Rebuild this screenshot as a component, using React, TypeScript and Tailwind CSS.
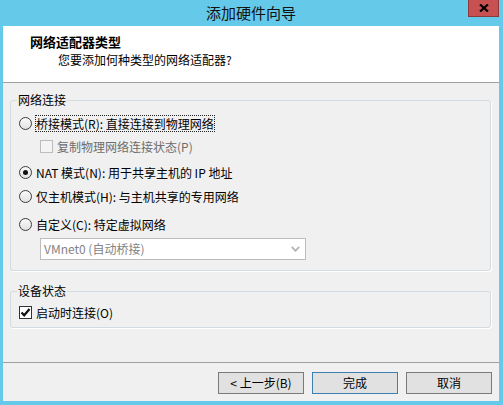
import React from "react";

function Radio({ checked }: { checked?: boolean }) {
  return (
    <span className="flex h-[13px] w-[13px] shrink-0 items-center justify-center rounded-full border border-[#3c3c3c] bg-gradient-to-b from-[#fafafa] to-[#e2e2e2]">
      {checked && <span className="h-[5px] w-[5px] rounded-full bg-[#111]" />}
    </span>
  );
}

function Check({ checked, disabled }: { checked?: boolean; disabled?: boolean }) {
  return (
    <span
      className={
        disabled
          ? "flex h-[13px] w-[13px] shrink-0 items-center justify-center border border-[#bcbcbc] bg-[#f4f4f4]"
          : "flex h-[13px] w-[13px] shrink-0 items-center justify-center border border-[#333] bg-white"
      }
    >
      {checked && (
        <svg width="11" height="11" viewBox="0 0 11 11">
          <path d="M1.5 5.5 L4.2 8.3 L9.5 2" fill="none" stroke="#111" strokeWidth="2.2" />
        </svg>
      )}
    </span>
  );
}

function Option({
  label,
  checked,
  focused,
}: {
  label: string;
  checked?: boolean;
  focused?: boolean;
}) {
  return (
    <div className="flex h-[16px] items-center gap-[3px]">
      <Radio checked={checked} />
      <span
        className={
          focused
            ? "border border-dotted border-[#222] px-[0px] leading-[15px]"
            : "border border-transparent leading-[15px]"
        }
      >
        {label}
      </span>
    </div>
  );
}

function Group({ title, children, pb }: { title: string; children: React.ReactNode; pb: string }) {
  return (
    <fieldset className="rounded-[3px] border border-[#d3dbe1] shadow-[1px_1px_0_#fff]">
      <legend className="ml-[6px] px-[1px] leading-[16px]">{title}</legend>
      <div className={"flex flex-col pl-[8px] " + pb}>{children}</div>
    </fieldset>
  );
}

export default function App() {
  return (
    <div className="flex h-[405px] w-[503px] flex-col bg-[#65c9e9] pb-[4px] pl-[3px] pr-[4px] font-['Noto_Sans_CJK_SC',sans-serif] text-[12px] text-black">
      {/* Title bar */}
      <div className="relative flex h-[26px] shrink-0 items-center justify-center">
        <span className="text-[15px] leading-[20px] text-[#111]">添加硬件向导</span>
        <div className="absolute right-0 top-0 flex h-[17px] w-[31px] items-center justify-center border border-t-0 border-[#8a3a3a] bg-[#c75050]">
          <svg width="10" height="8" viewBox="0 0 10 8">
            <path d="M1 0.5 L9 7.5 M9 0.5 L1 7.5" stroke="#000" strokeWidth="2.2" />
          </svg>
        </div>
      </div>

      <div className="flex flex-1 flex-col bg-[#f0f0f0]">
        {/* Header */}
        <div className="h-[57px] shrink-0 border-b border-[#a0a0a0] bg-white pl-[27px] pt-[8px]">
          <div className="text-[13px] font-bold leading-[16px]">网络适配器类型</div>
          <div className="ml-[28px] mt-[2px] leading-[16px]">您要添加何种类型的网络适配器?</div>
        </div>

        {/* Body */}
        <div className="flex flex-1 flex-col pl-[7px] pr-[8px] pt-[9px]">
          <Group title="网络连接" pb="pb-[10px]">
            <div className="mt-[7px]">
              <Option label="桥接模式(R): 直接连接到物理网络" focused />
            </div>
            <div className="mt-[7px] flex h-[16px] items-center gap-[3px] pl-[21px] text-[#6d6d6d]">
              <Check disabled />
              <span className="border border-transparent leading-[15px]">复制物理网络连接状态(P)</span>
            </div>
            <div className="mt-[10px]">
              <Option label="NAT 模式(N): 用于共享主机的 IP 地址" checked />
            </div>
            <div className="mt-[8px]">
              <Option label="仅主机模式(H): 与主机共享的专用网络" />
            </div>
            <div className="mt-[12px]">
              <Option label="自定义(C): 特定虚拟网络" />
            </div>
            <div className="ml-[21px] mt-[6px] flex h-[22px] w-[266px] items-center justify-between border border-[#bcbcbc] bg-white pl-[3px] pr-[5px] text-[#838383]">
              <span className="leading-[16px]">VMnet0 (自动桥接)</span>
              <svg width="9" height="6" viewBox="0 0 9 6">
                <path d="M0.8 0.8 L4.5 4.8 L8.2 0.8" fill="none" stroke="#b4b4b4" strokeWidth="1.8" />
              </svg>
            </div>
          </Group>

          <div className="mt-[12px]">
            <Group title="设备状态" pb="pb-[7px]">
              <div className="mt-[5px] flex h-[16px] items-center gap-[3px]">
                <Check checked />
                <span className="border border-transparent leading-[15px]">启动时连接(O)</span>
              </div>
            </Group>
          </div>
        </div>

        {/* Footer */}
        <div className="flex shrink-0 justify-end gap-[8px] border-t border-[#a0a0a0] pb-[7px] pr-[7px] pt-[9px]">
          <button className="h-[22px] w-[86px] border border-[#7a7a7a] bg-[#e1e1e1] leading-[16px]">
            &lt; 上一步(B)
          </button>
          <button className="h-[22px] w-[86px] border border-[#3c7fb1] bg-[#e1e1e1] leading-[16px]">
            完成
          </button>
          <button className="h-[22px] w-[86px] border border-[#7a7a7a] bg-[#e1e1e1] leading-[16px]">
            取消
          </button>
        </div>
      </div>
    </div>
  );
}
